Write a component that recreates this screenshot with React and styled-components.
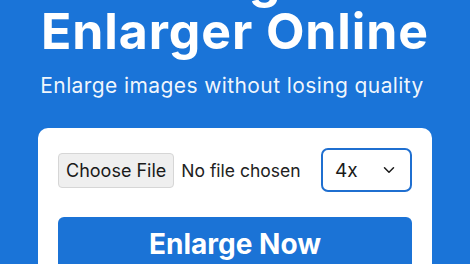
import styled, { createGlobalStyle } from "styled-components";
import { ChevronDown } from "lucide-react";

const Global = createGlobalStyle`
  html, body {
    margin: 0;
    padding: 0;
    background: #1a74d8;
    font-family: Inter, "Noto Sans", sans-serif;
    overflow: hidden;
  }
`;

const Page = styled.div`
  display: flex;
  flex-direction: column;
  align-items: center;
  height: 264px;
  color: #fff;
`;

const Title = styled.h1`
  margin: -47px 0 0;
  font-size: 50px;
  line-height: 52px;
  font-weight: 700;
  text-align: center;
  letter-spacing: 0.9px;
`;

const Subtitle = styled.p`
  margin: 16px 0 0 -6px;
  font-size: 21px;
  line-height: 26px;
  letter-spacing: 0.4px;
  color: rgba(255, 255, 255, 0.95);
`;

const Card = styled.div`
  margin-top: 29px;
  width: 394px;
  box-sizing: border-box;
  padding: 20px;
  background: #fff;
  border-radius: 10px;
  display: flex;
  flex-direction: column;
  gap: 25px;
`;

const Row = styled.div`
  display: flex;
  align-items: center;
  justify-content: space-between;
`;

const FilePicker = styled.div`
  display: flex;
  align-items: center;
  gap: 7px;
`;

const FileButton = styled.label`
  height: 35px;
  box-sizing: border-box;
  padding: 0 7px;
  display: flex;
  align-items: center;
  font-size: 18px;
  color: #1a1a1a;
  background: #efefef;
  border: 1px solid #d6d6d6;
  border-radius: 4px;
`;

const FileName = styled.span`
  font-size: 17.5px;
  color: #222;
`;

const Select = styled.div`
  width: 91px;
  height: 44px;
  box-sizing: border-box;
  border: 2px solid #1f6fd0;
  border-radius: 7px;
  padding: 0 12px 0 12px;
  display: flex;
  align-items: center;
  justify-content: space-between;
  font-size: 19px;
  color: #1a1a1a;
`;

const Button = styled.button`
  height: 60px;
  border: none;
  border-radius: 6px;
  background: #1b73d6;
  color: #fff;
  font-family: inherit;
  font-size: 28px;
  font-weight: 700;
  padding: 0 0 6px;
`;

export default function App() {
  return (
    <>
      <Global />
      <Page>
        <Title>
          Image
          <br />
          Enlarger Online
        </Title>
        <Subtitle>Enlarge images without losing quality</Subtitle>
        <Card>
          <Row>
            <FilePicker>
              <FileButton>Choose File</FileButton>
              <FileName>No file chosen</FileName>
            </FilePicker>
            <Select>
              <span>4x</span>
              <ChevronDown size={18} strokeWidth={2} />
            </Select>
          </Row>
          <Button>Enlarge Now</Button>
        </Card>
      </Page>
    </>
  );
}
